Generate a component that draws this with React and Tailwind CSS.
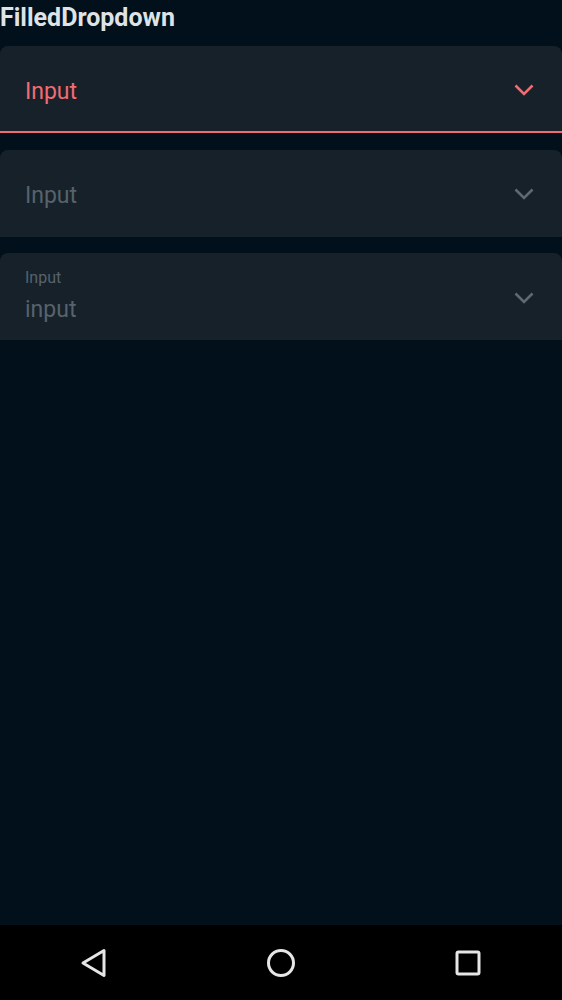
import React from 'react';

const Chevron = ({ color }) => (
  <svg width="24" height="24" viewBox="0 0 24 24" fill="none" className="mt-[2px]">
    <path d="M3.5 7.5 L12 16 L20.5 7.5" stroke={color} strokeWidth="2.6" strokeLinecap="butt" strokeLinejoin="miter" />
  </svg>
);

const Field = ({ active, label, value }) => {
  const chevronColor = active ? '#f26b73' : '#5e6a73';
  return (
    <div
      className={`h-[87px] bg-[#16212a] rounded-t-lg flex items-center pl-[25px] pr-[26px] ${
        active ? 'border-b-2 border-[#f26b73]' : ''
      }`}
    >
      <div className="flex-1 flex flex-col justify-center mt-[6px]">
        {label && <div className="text-[16px] leading-[18px] text-[#56636c] -mt-[6px]">{label}</div>}
        <div
          className={`text-[23px] leading-[28px] ${label ? 'mt-[9px]' : ''} ${
            active ? 'text-[#f26b73]' : 'text-[#56636c]'
          }`}
        >
          {value}
        </div>
      </div>
      <Chevron color={chevronColor} />
    </div>
  );
};

export default function App() {
  return (
    <div className="w-[562px] h-[1000px] bg-[#01101a] flex flex-col" style={{ fontFamily: 'Roboto, "Noto Sans", sans-serif' }}>
      <div className="h-[46px] shrink-0">
        <div className="text-[25px] leading-[36px] font-bold text-[#dfe3e6]">FilledDropdown</div>
      </div>
      <div className="flex flex-col gap-[16.5px]">
        <Field active value="Input" />
        <Field value="Input" />
        <Field label="Input" value="input" />
      </div>
      <div className="flex-1" />
      <div className="h-[75px] bg-black flex items-center justify-between px-[79px]">
        <svg width="30" height="32" viewBox="0 0 30 32" fill="none">
          <path d="M25 3.5 L4 16 L25 28.5 Z" stroke="#e6e6e6" strokeWidth="3" strokeLinejoin="round" />
        </svg>
        <svg width="30" height="32" viewBox="0 0 30 32" fill="none">
          <circle cx="15" cy="16" r="12.5" stroke="#e6e6e6" strokeWidth="3" />
        </svg>
        <svg width="30" height="30" viewBox="0 0 30 30" fill="none">
          <rect x="4" y="4" width="22" height="22" rx="1.5" stroke="#e6e6e6" strokeWidth="3" />
        </svg>
      </div>
    </div>
  );
}
